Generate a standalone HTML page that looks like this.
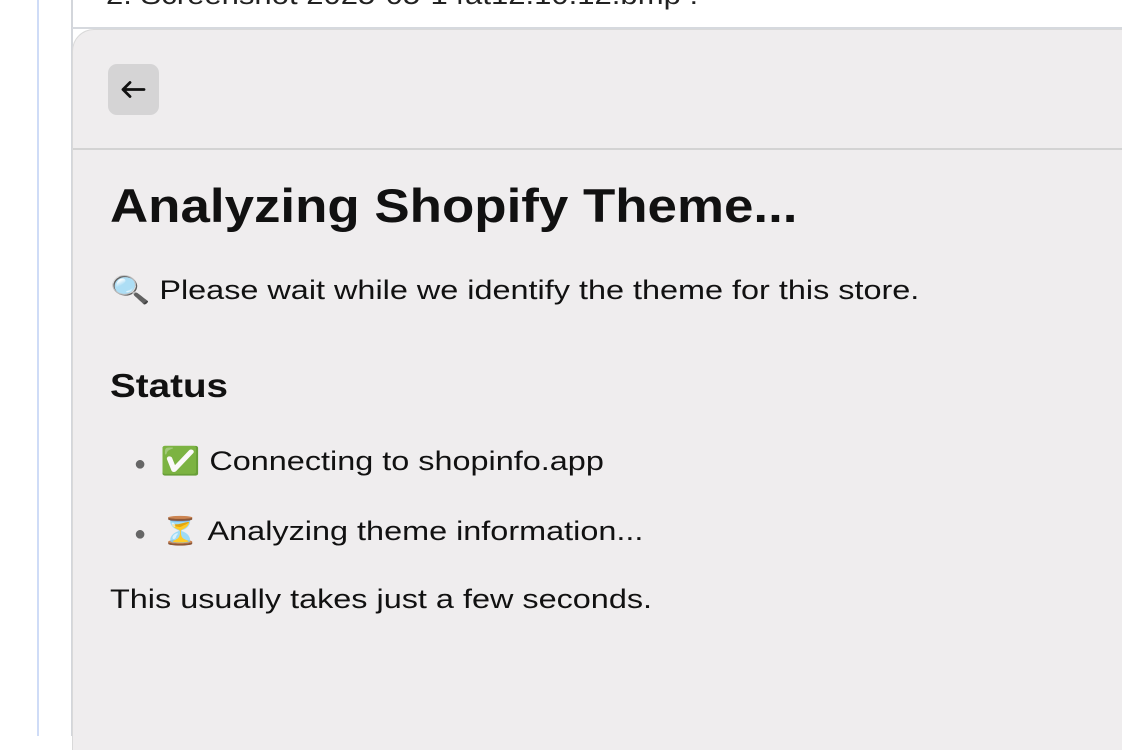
<html><head><style>
body{margin:0;width:1122px;height:736px;overflow:hidden;background:#fff;font-family:"Liberation Sans",sans-serif;position:relative}
.vl{position:absolute;left:37px;top:0;width:2px;height:736px;background:#cfdcf7}
.bl{position:absolute;left:71px;top:0;width:2px;height:736px;background:#d3d6db}
.toptxt{position:absolute;left:106px;top:-20px;font-size:27px;color:#222;white-space:nowrap;transform:scaleX(1.15);transform-origin:left}
.hl{position:absolute;left:72px;top:27px;width:1050px;height:2px;background:#d6d9de}
.card{position:absolute;left:72px;top:29px;width:1060px;height:720px;background:#efedee;border-top-left-radius:22px;border:1px solid #d9d9d9;border-right:none;border-bottom:none}
.btn{position:absolute;left:35px;top:34px;width:51px;height:51px;background:#d5d4d5;border-radius:9px}
.div{position:absolute;left:0;top:118px;width:1060px;height:2px;background:#d3d3d3}
.t{position:absolute;white-space:nowrap;color:#111;transform-origin:left}
</style></head><body>
<div class="vl"></div><div class="bl"></div>
<div class="toptxt">2. Screenshot 2025-05-14at12.10.12.bmp :</div>
<div class="hl"></div>
<div class="card">
<div class="btn"><svg width="51" height="51" viewBox="0 0 51 51"><path d="M36 25.5H15M22 18.5l-7 7 7 7" stroke="#111" stroke-width="2.8" fill="none" stroke-linecap="round" stroke-linejoin="round"/></svg></div>
<div class="div"></div>
<div class="t" style="left:37px;top:148px;font-size:47px;font-weight:bold;transform:scaleX(1.125)">Analyzing Shopify Theme...</div>
<div class="t" style="left:37px;top:244px;font-size:27px;transform:scaleX(1.2)">🔍 Please wait while we identify the theme for this store.</div>
<div class="t" style="left:37px;top:337px;font-size:33px;font-weight:bold;transform:scaleX(1.17)">Status</div>
<div class="t" style="left:61px;top:415px;font-size:27px"><span style="color:#666;font-size:20px;margin-right:14px">●</span><span style="display:inline-block;transform:scaleX(1.2);transform-origin:left">✅ Connecting to shopinfo.app</span></div>
<div class="t" style="left:61px;top:485px;font-size:27px"><span style="color:#666;font-size:20px;margin-right:14px">●</span><span style="display:inline-block;transform:scaleX(1.2);transform-origin:left">⏳ Analyzing theme information...</span></div>
<div class="t" style="left:37px;top:554px;font-size:27px;transform:scaleX(1.2)">This usually takes just a few seconds.</div>
</div>
</body></html>
